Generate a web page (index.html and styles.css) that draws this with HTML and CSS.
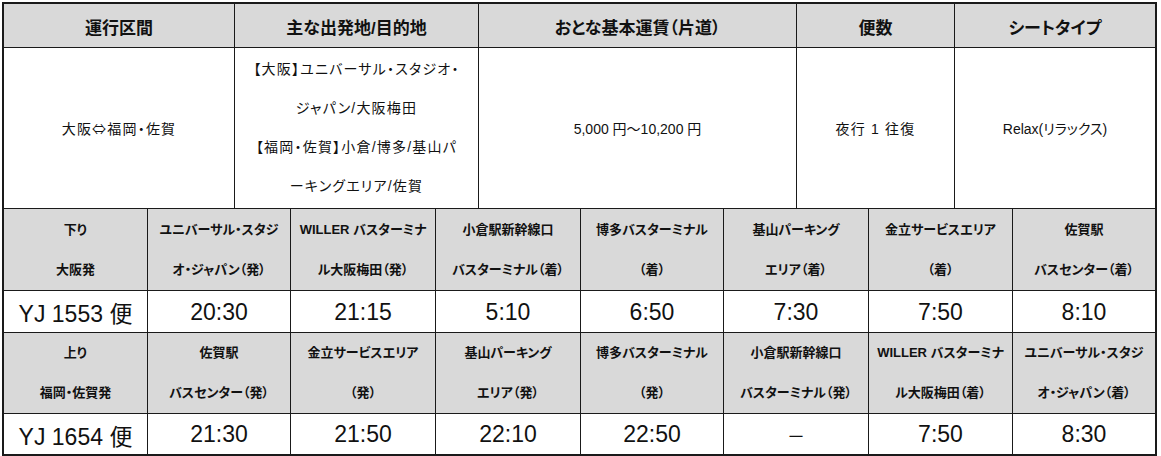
FILE: index.html
```html
<!DOCTYPE html>
<html lang="ja">
<head>
<meta charset="utf-8">
<title>運行区間</title>
<link rel="stylesheet" href="styles.css">
</head>
<body>
<div class="page">
  <div class="grid grid-top">
    <div class="cell head">運行区間</div>
    <div class="cell head">主な出発地/目的地</div>
    <div class="cell head">おとな基本運賃（片道）</div>
    <div class="cell head">便数</div>
    <div class="cell head last">シートタイプ</div>

    <div class="cell body spaced">大阪<span class="arrow">⇔</span>福岡・佐賀</div>
    <div class="cell body spaced lines">【大阪】ユニバーサル・スタジオ・<br>ジャパン/大阪梅田<br>【福岡・佐賀】小倉/博多/基山パ<br>ーキングエリア/佐賀</div>
    <div class="cell body">5,000 円～10,200 円</div>
    <div class="cell body spaced">夜行 1 往復</div>
    <div class="cell body last">Relax(リラックス)</div>
  </div>

  <div class="grid grid-time">
    <div class="cell stop">下り<br>大阪発</div>
    <div class="cell stop">ユニバーサル・スタジ<br>オ・ジャパン（発）</div>
    <div class="cell stop">WILLER バスターミナ<br>ル大阪梅田（発）</div>
    <div class="cell stop">小倉駅新幹線口<br>バスターミナル（着）</div>
    <div class="cell stop">博多バスターミナル<br>（着）</div>
    <div class="cell stop">基山パーキング<br>エリア（着）</div>
    <div class="cell stop">金立サービスエリア<br>（着）</div>
    <div class="cell stop last">佐賀駅<br>バスセンター（着）</div>

    <div class="cell time">YJ 1553 便</div>
    <div class="cell time">20:30</div>
    <div class="cell time">21:15</div>
    <div class="cell time">5:10</div>
    <div class="cell time">6:50</div>
    <div class="cell time">7:30</div>
    <div class="cell time">7:50</div>
    <div class="cell time last">8:10</div>

    <div class="cell stop">上り<br>福岡・佐賀発</div>
    <div class="cell stop">佐賀駅<br>バスセンター（発）</div>
    <div class="cell stop">金立サービスエリア<br>（発）</div>
    <div class="cell stop">基山パーキング<br>エリア（発）</div>
    <div class="cell stop">博多バスターミナル<br>（発）</div>
    <div class="cell stop">小倉駅新幹線口<br>バスターミナル（発）</div>
    <div class="cell stop">WILLER バスターミナ<br>ル大阪梅田（着）</div>
    <div class="cell stop last">ユニバーサル・スタジ<br>オ・ジャパン（着）</div>

    <div class="cell time bottom">YJ 1654 便</div>
    <div class="cell time bottom">21:30</div>
    <div class="cell time bottom">21:50</div>
    <div class="cell time bottom">22:10</div>
    <div class="cell time bottom">22:50</div>
    <div class="cell time bottom dash">－</div>
    <div class="cell time bottom">7:50</div>
    <div class="cell time bottom last">8:30</div>
  </div>
</div>
</body>
</html>
```

FILE: styles.css
```css
* {
  box-sizing: border-box;
}

html, body {
  margin: 0;
  padding: 0;
  background: #ffffff;
}

body {
  font-family: "Liberation Sans", "Noto Sans CJK JP", sans-serif;
  font-feature-settings: "palt";
  color: #111111;
}

.page {
  padding: 2px 0 0 2px;
  width: 1161px;
}

.grid {
  display: grid;
  width: 1155px;
  border-left: 2px solid #1a1a1a;
}

.grid-top {
  border-top: 2px solid #1a1a1a;
  grid-template-columns: 231px 244px 318px 158px 202px;
  grid-template-rows: 44px 161px;
}

.grid-time {
  grid-template-columns: 144px 143px 145px 145px 143px 145px 144px 144px;
  grid-template-rows: 82px 42px 81px 42px;
}

.cell {
  display: flex;
  align-items: center;
  justify-content: center;
  text-align: center;
  border-right: 1px solid #1a1a1a;
  border-bottom: 1px solid #1a1a1a;
  white-space: nowrap;
}

.cell.last {
  border-right: 2px solid #1a1a1a;
}

.cell.bottom {
  border-bottom: 2px solid #1a1a1a;
}

.head {
  background: #d9d9d9;
  font-weight: bold;
  font-size: 17px;
  padding-top: 2px;
}

.body {
  font-size: 14px;
  background: #ffffff;
}

.spaced {
  letter-spacing: 1.2px;
}

.arrow {
  font-family: "Noto Sans CJK JP", sans-serif;
  font-feature-settings: normal;
}

.lines {
  line-height: 39px;
}

.stop {
  background: #d9d9d9;
  font-weight: bold;
  font-size: 13px;
  line-height: 40px;
}

.time {
  background: #ffffff;
  font-size: 23px;
  padding-top: 1px;
}

.dash {
  font-size: 18px;
}
```
